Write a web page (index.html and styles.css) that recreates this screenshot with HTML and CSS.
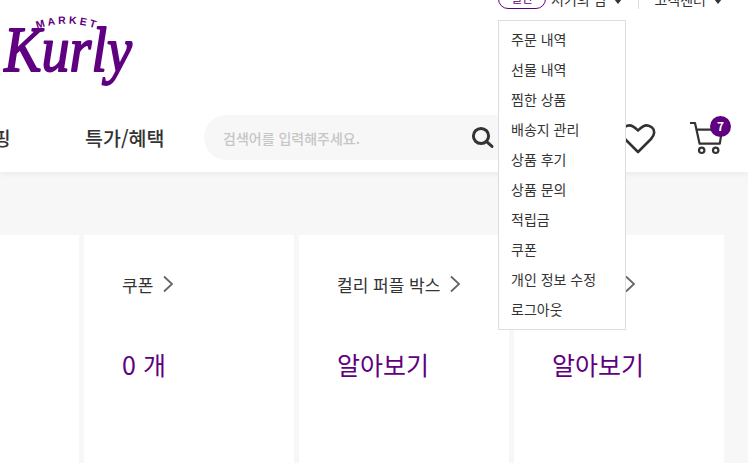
FILE: index.html
```html
<!DOCTYPE html>
<html lang="ko">
    <head>
        <meta charset="UTF-8" />
        <title>Market Kurly</title>
        <link rel="stylesheet" href="styles.css">
    </head>
    <body>
        <header class="header">
            <div class="topbar">
                <span class="grade">일반</span>
                <span class="user">서기의 님</span>
                <span class="caret"></span>
                <span class="divider"></span>
                <span class="user">고객센터</span>
                <span class="caret"></span>
            </div>
            <div class="logoRow">
                <svg class="logo" width="136" height="90" viewBox="0 0 136 90">
                    <defs>
                        <path id="logoArc" d="M34 20 Q65 9 97 21"></path>
                    </defs>
                    <text class="logoMarket"><textPath href="#logoArc">MARKET</textPath></text>
                    <text class="logoKurly" x="1" y="62" textLength="128" lengthAdjust="spacingAndGlyphs">Kurly</text>
                </svg>
            </div>
            <nav class="nav">
                <a class="navItem first">알뜰쇼핑</a>
                <a class="navItem">특가/혜택</a>
                <div class="search">
                    <span class="placeholder">검색어를 입력해주세요.</span>
                    <svg width="24" height="24" viewBox="0 0 24 24" class="searchIcon">
                        <circle cx="10" cy="10" r="7.600" fill="none" stroke="#333" stroke-width="3"></circle>
                        <line x1="15.600" y1="15.600" x2="21" y2="20.400" stroke="#333" stroke-width="3" stroke-linecap="round"></line>
                    </svg>
                </div>
                <svg class="heart" width="36" height="32" viewBox="0 0 36 32">
                    <path d="M18 29 L5 16 C1 12 1 7 4 4.500 C8 1 13 2 18 7.500 C23 2 28 1 32 4.500 C35 7 35 12 31 16 Z" fill="none" stroke="#333" stroke-width="2.600" stroke-linejoin="round"></path>
                </svg>
                <div class="cart">
                    <svg width="36" height="34" viewBox="0 0 36 34">
                        <path d="M1 2 H6 L10.600 22.700 H30.800 L33 9 M7.200 8.700 H22" fill="none" stroke="#333" stroke-width="2.200" stroke-linejoin="round"></path>
                        <circle cx="12.700" cy="29.300" r="2.700" fill="none" stroke="#333" stroke-width="2.200"></circle>
                        <circle cx="26.700" cy="29.300" r="2.700" fill="none" stroke="#333" stroke-width="2.200"></circle>
                    </svg>
                    <span class="cartCount">7</span>
                </div>
            </nav>
        </header>

        <ul class="menu">
            <li>주문 내역</li>
            <li>선물 내역</li>
            <li>찜한 상품</li>
            <li>배송지 관리</li>
            <li>상품 후기</li>
            <li>상품 문의</li>
            <li>적립금</li>
            <li>쿠폰</li>
            <li>개인 정보 수정</li>
            <li>로그아웃</li>
        </ul>

        <section class="cards">
            <div class="card">
                <div class="cardTitle">적립금 <svg class="chevron" width="12" height="18" viewBox="0 0 12 18"><polyline points="2,1.500 10,9 2,16.500"></polyline></svg></div>
                <div class="cardValue">0 원</div>
            </div>
            <div class="card">
                <div class="cardTitle">쿠폰 <svg class="chevron" width="12" height="18" viewBox="0 0 12 18"><polyline points="2,1.500 10,9 2,16.500"></polyline></svg></div>
                <div class="cardValue">0 개</div>
            </div>
            <div class="card">
                <div class="cardTitle">컬리 퍼플 박스 <svg class="chevron" width="12" height="18" viewBox="0 0 12 18"><polyline points="2,1.500 10,9 2,16.500"></polyline></svg></div>
                <div class="cardValue">알아보기</div>
            </div>
            <div class="card">
                <div class="cardTitle">컬리패스 <svg class="chevron" width="12" height="18" viewBox="0 0 12 18"><polyline points="2,1.500 10,9 2,16.500"></polyline></svg></div>
                <div class="cardValue">알아보기</div>
            </div>
        </section>
    </body>
</html>
```

FILE: styles.css
```css
html, body {
    height: 100%;
}
body {
    margin: 0;
    height: 463px;
    overflow: hidden;
    position: relative;
    background: #f7f7f7;
    color: #333;
    font-family: "Noto Sans CJK KR", "Noto Sans", sans-serif;
}

/* header */
.header {
    height: 172px;
    background: white;
    box-shadow: 0 2px 6px rgba(0, 0, 0, 0.05);
}
.topbar {
    height: 9px;
    display: flex;
    align-items: flex-end;
    padding-left: 498px;
    font-size: 14px;
    line-height: 18px;
}
.grade {
    box-sizing: border-box;
    width: 48px;
    height: 20px;
    border: 1px solid #5f0080;
    border-radius: 10px;
    color: #5f0080;
    font-size: 12px;
    line-height: 15px;
    text-align: center;
    flex: none;
    margin-right: 5px;
}
.user {
    flex: none;
    margin-bottom: 1px;
}
.caret {
    flex: none;
    width: 0;
    height: 0;
    margin: 0 0 5px 8px;
    border-left: 4px solid transparent;
    border-right: 4px solid transparent;
    border-top: 5px solid #333;
}
.divider {
    flex: none;
    width: 1px;
    height: 9px;
    margin: 0 15px 0 16px;
    background: #ddd;
}
.logoRow {
    height: 106px;
    padding-left: 3px;
    box-sizing: border-box;
}
.logo {
    display: block;
}
.logoMarket {
    font-family: "Liberation Sans", sans-serif;
    font-weight: bold;
    font-size: 10.500px;
    letter-spacing: 2.800px;
    fill: #5f0080;
}
.logoKurly {
    font-family: "Liberation Serif", serif;
    font-style: italic;
    font-size: 64px;
    fill: #5f0080;
    stroke: #5f0080;
    stroke-width: 1.800;
    stroke-linejoin: round;
}
.nav {
    height: 45px;
    display: flex;
    align-items: center;
    margin-left: -61px;
}
.navItem {
    flex: none;
    width: 70px;
    margin-right: 76px;
    font-size: 19.500px;
    font-weight: 500;
    line-height: 45px;
    margin-top: -1px;
    white-space: nowrap;
}
.navItem:not(.first) {
    width: 79px;
    margin-right: 40px;
}
.search {
    flex: none;
    width: 312px;
    height: 45px;
    box-sizing: border-box;
    padding: 0 21px 0 19px;
    display: flex;
    align-items: center;
    justify-content: space-between;
    border-radius: 23px;
    background: #f7f7f7;
}
.placeholder {
    color: #c6c6c6;
    font-size: 14px;
    font-weight: 500;
}
.searchIcon {
    margin-top: 1px;
}
.heart {
    flex: none;
    margin: 2px 0 0 104px;
}
.cart {
    flex: none;
    position: relative;
    margin: 1px 0 0 33px;
    width: 36px;
    height: 34px;
}
.cart svg {
    display: block;
}
.cartCount {
    position: absolute;
    left: 21px;
    top: -5px;
    width: 21px;
    height: 21px;
    border-radius: 50%;
    background: #5f0080;
    color: white;
    font-size: 12px;
    font-weight: 700;
    line-height: 20px;
    text-align: center;
}

/* dropdown */
.menu {
    position: absolute;
    left: 498px;
    top: 20px;
    box-sizing: border-box;
    width: 128px;
    height: 310px;
    margin: 0;
    padding: 3px 12px;
    list-style: none;
    background: white;
    border: 1px solid #ddd;
    font-size: 14px;
}
.menu li {
    height: 30px;
    line-height: 30px;
    white-space: nowrap;
}

/* cards */
.cards {
    display: grid;
    grid-template-columns: repeat(4, 210px);
    gap: 5px;
    margin: 63px 0 0 -131px;
}
.card {
    height: 228px;
    box-sizing: border-box;
    background: white;
    padding: 37px 0 0 38px;
    white-space: nowrap;
}
.cardTitle {
    display: flex;
    align-items: center;
    gap: 9px;
    height: 24px;
    font-size: 17px;
    color: #333;
}
.chevron {
    flex: none;
    fill: none;
    stroke: #666;
    stroke-width: 1.800;
}
.cardValue {
    margin-top: 50px;
    font-size: 25px;
    line-height: 36px;
    color: #5f0080;
}
```
